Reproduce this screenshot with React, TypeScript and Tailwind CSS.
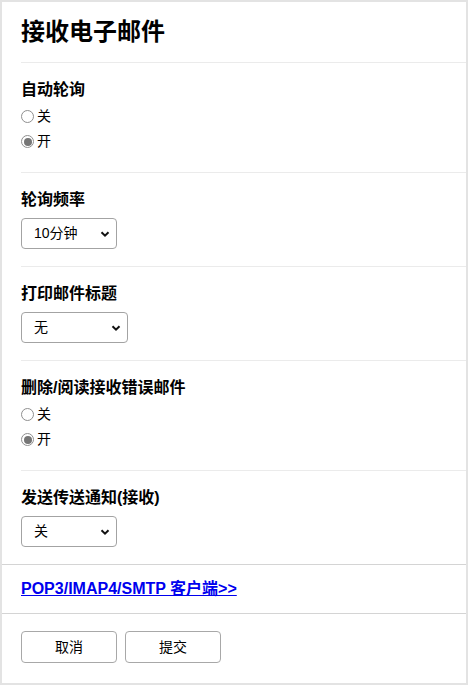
const font = { fontFamily: '"Liberation Sans", "Noto Sans CJK SC", sans-serif' };

function Radio({ label, checked }: { label: string; checked?: boolean }) {
  return (
    <div className="flex h-[25px] items-center gap-[3px] text-[14px] text-black">
      <span className="flex h-[13px] w-[13px] items-center justify-center rounded-full border border-[#8f8f8f] bg-white">
        {checked && <span className="h-[8px] w-[8px] rounded-full bg-[#767676]" />}
      </span>
      <span>{label}</span>
    </div>
  );
}

function Select({ value, width }: { value: string; width: string }) {
  return (
    <div
      className={`mt-1.5 flex h-[31px] items-center justify-between rounded-[4px] border border-[#a3a3a3] bg-white pl-[12px] pr-[6px] text-[14px] text-black ${width}`}
    >
      <span>{value}</span>
      <svg viewBox="0 0 10 10" className="h-[10px] w-[10px]">
        <path d="M1.5 3.2 L5 6.7 L8.5 3.2" fill="none" stroke="#111" strokeWidth="2" />
      </svg>
    </div>
  );
}

function Section({ title, children, last }: { title: string; children: React.ReactNode; last?: boolean }) {
  return (
    <section
      className={`ml-[19px] pt-[15px] ${last ? "pb-[17px]" : "border-b border-[#ebebeb]"}`}
    >
      <h3 className="text-[16px] font-bold leading-6 text-black">{title}</h3>
      {children}
    </section>
  );
}

export default function App() {
  return (
    <div style={font} className="h-[685px] w-[468px] border-2 border-[#e3e3e3] bg-white">
      <div className="ml-[19px] border-b border-[#ebebeb] pt-4 pb-4">
        <h2 className="text-[24px] font-bold leading-7 text-black">接收电子邮件</h2>
      </div>

      <Section title="自动轮询">
        <div className="mt-0.5 pb-[18px]">
          <Radio label="关" />
          <Radio label="开" checked />
        </div>
      </Section>

      <Section title="轮询频率">
        <div className="pb-[17px]">
          <Select value="10分钟" width="w-[96px]" />
        </div>
      </Section>

      <Section title="打印邮件标题">
        <div className="pb-[17px]">
          <Select value="无" width="w-[107px]" />
        </div>
      </Section>

      <Section title="删除/阅读接收错误邮件">
        <div className="mt-0.5 pb-[18px]">
          <Radio label="关" />
          <Radio label="开" checked />
        </div>
      </Section>

      <Section title="发送传送通知(接收)" last>
        <Select value="关" width="w-[96px]" />
      </Section>

      <div className="flex h-[50px] items-center border-y border-[#d4d4d4] pl-[19px]">
        <a href="#" className="text-[16px] font-bold text-[#0000ee] underline">
          POP3/IMAP4/SMTP 客户端&gt;&gt;
        </a>
      </div>

      <div className="ml-[19px] mt-[17px] flex gap-2">
        {["取消", "提交"].map((b) => (
          <button
            key={b}
            type="button"
            className="h-[32px] w-[96px] rounded-[4px] border border-[#a8a8a8] bg-white text-[14px] text-black"
          >
            {b}
          </button>
        ))}
      </div>
    </div>
  );
}
